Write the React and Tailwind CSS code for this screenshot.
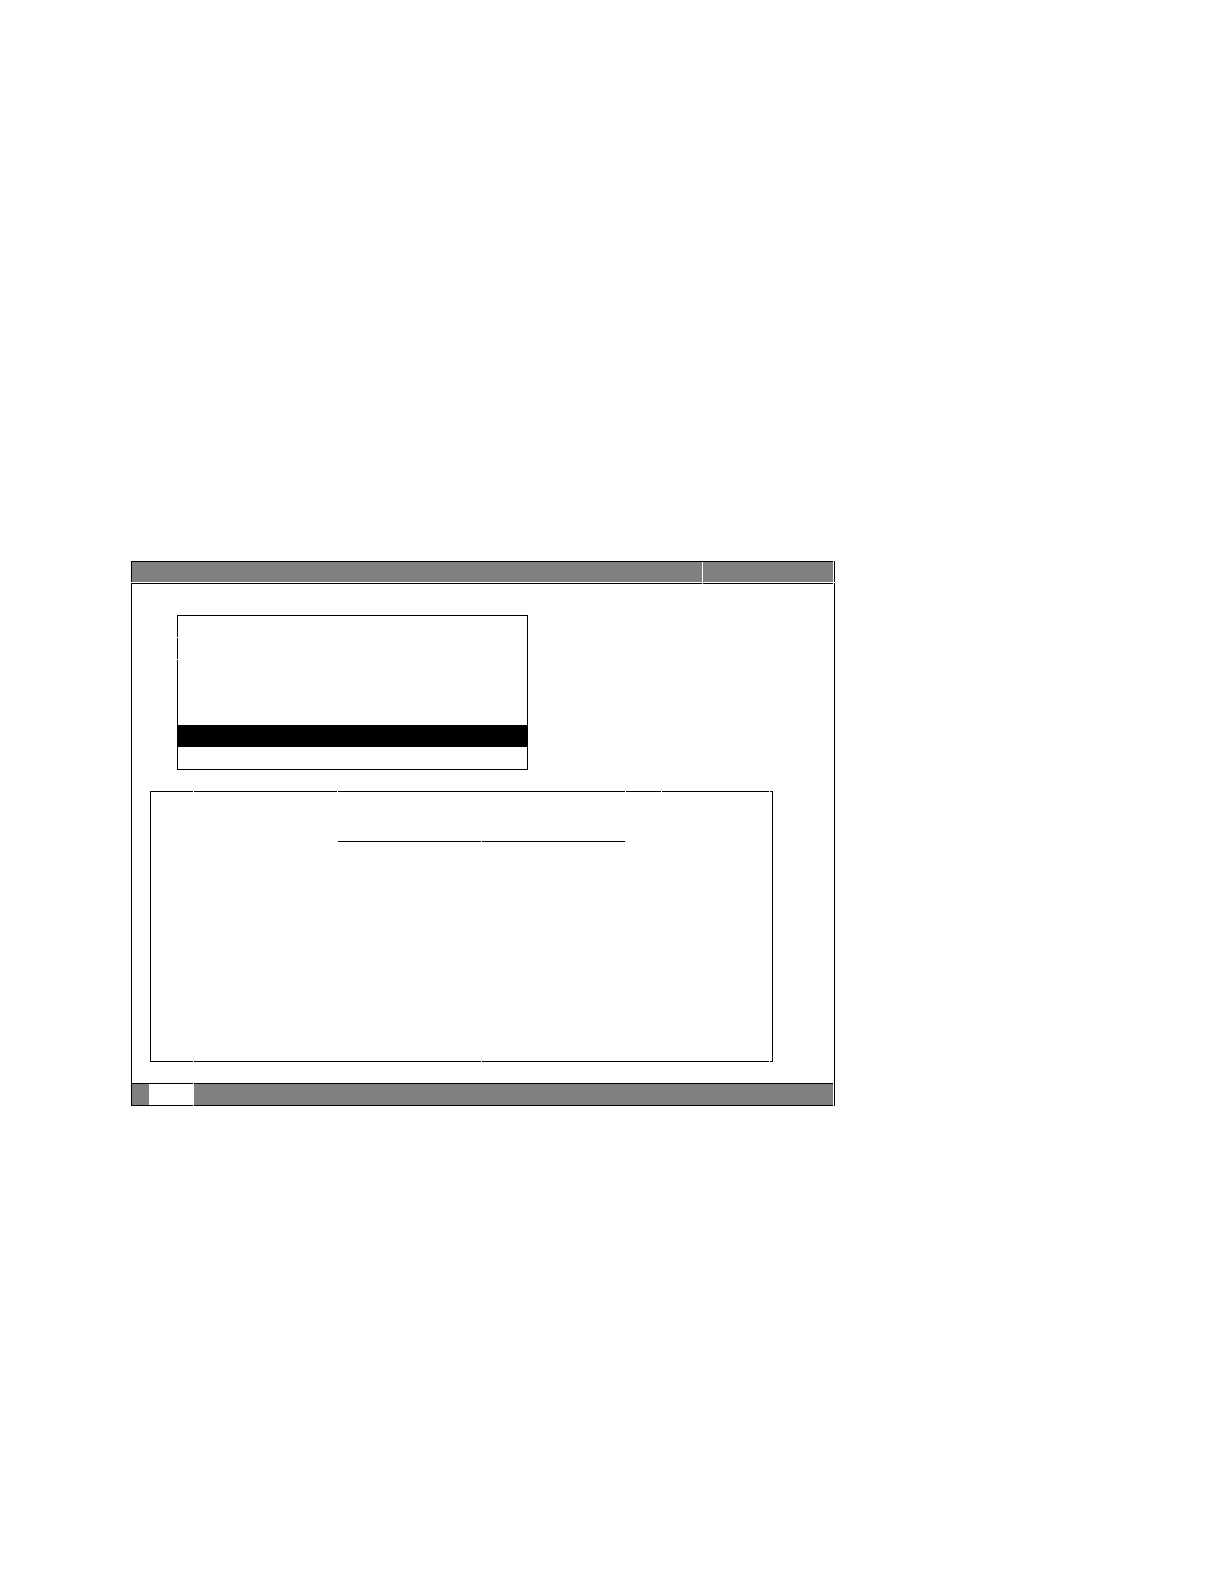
const menuRows = [
  { id: "first", className: "h-[21px]" },
  { id: "second", className: "mt-px h-[21px]" },
  { id: "third", className: "mt-px h-[21px]" },
  { id: "fourth", className: "h-[22px]" },
  { id: "fifth", className: "h-[22px]" },
  { id: "selected", className: "h-[22px] bg-black" },
  { id: "last", className: "h-[22px]" }
];

export default function App() {
  return (
    <main className="min-h-screen bg-white pt-[561px] pr-[389px] pb-12 pl-[131px] font-['Liberation_Sans',sans-serif]">
      <TitleBar />
      <section className="mt-px border-x border-black">
        <Rule className="pr-px" segments={["flex-1", "w-[130px]"]} />
        <Menu />
        <Panel />
        <StatusBar />
      </section>
    </main>
  );
}

// Horizontal line made of segments, one pixel apart
function Rule({ segments, className = "" }) {
  return (
    <div className={`flex h-px gap-px ${className}`}>
      {segments.map((width, index) => (
        <span key={index} className={`bg-black ${width}`} />
      ))}
    </div>
  );
}

function TitleBar() {
  return (
    <header className="flex h-[21px] gap-px">
      <div className="flex flex-1 gap-px border-t border-l border-black">
        <div className="flex-1 bg-[#808080]" />
        <div className="w-[130px] bg-[#808080]" />
      </div>
      <span className="w-px bg-black" />
    </header>
  );
}

function Menu() {
  return (
    <ul className="mt-[31px] ml-[45px] w-1/2 border-y border-r border-black">
      {menuRows.map((row) => (
        <li key={row.id} className={`border-l border-black ${row.className}`} />
      ))}
    </ul>
  );
}

function Panel() {
  return (
    <div className="mt-[21px] mr-[61px] ml-[18px]">
      <Rule segments={["w-[43px]", "w-[143px]", "flex-1", "w-[35px]", "w-[107px]", "w-[3px]"]} />
      <div className="h-[269px] border-x border-black pt-[49px] pr-[147px] pl-[187px]">
        <Rule segments={["flex-1", "flex-1"]} />
      </div>
      <Rule segments={["w-[43px]", "flex-1", "flex-1", "w-[3px]"]} />
    </div>
  );
}

function StatusBar() {
  return (
    <footer className="mt-[21px] flex h-[23px] gap-px pr-px">
      <div className="flex w-[61px] border-y border-black">
        <span className="w-[17px] bg-[#808080]" />
      </div>
      <div className="flex-1 border-y border-black bg-[#808080]" />
    </footer>
  );
}
